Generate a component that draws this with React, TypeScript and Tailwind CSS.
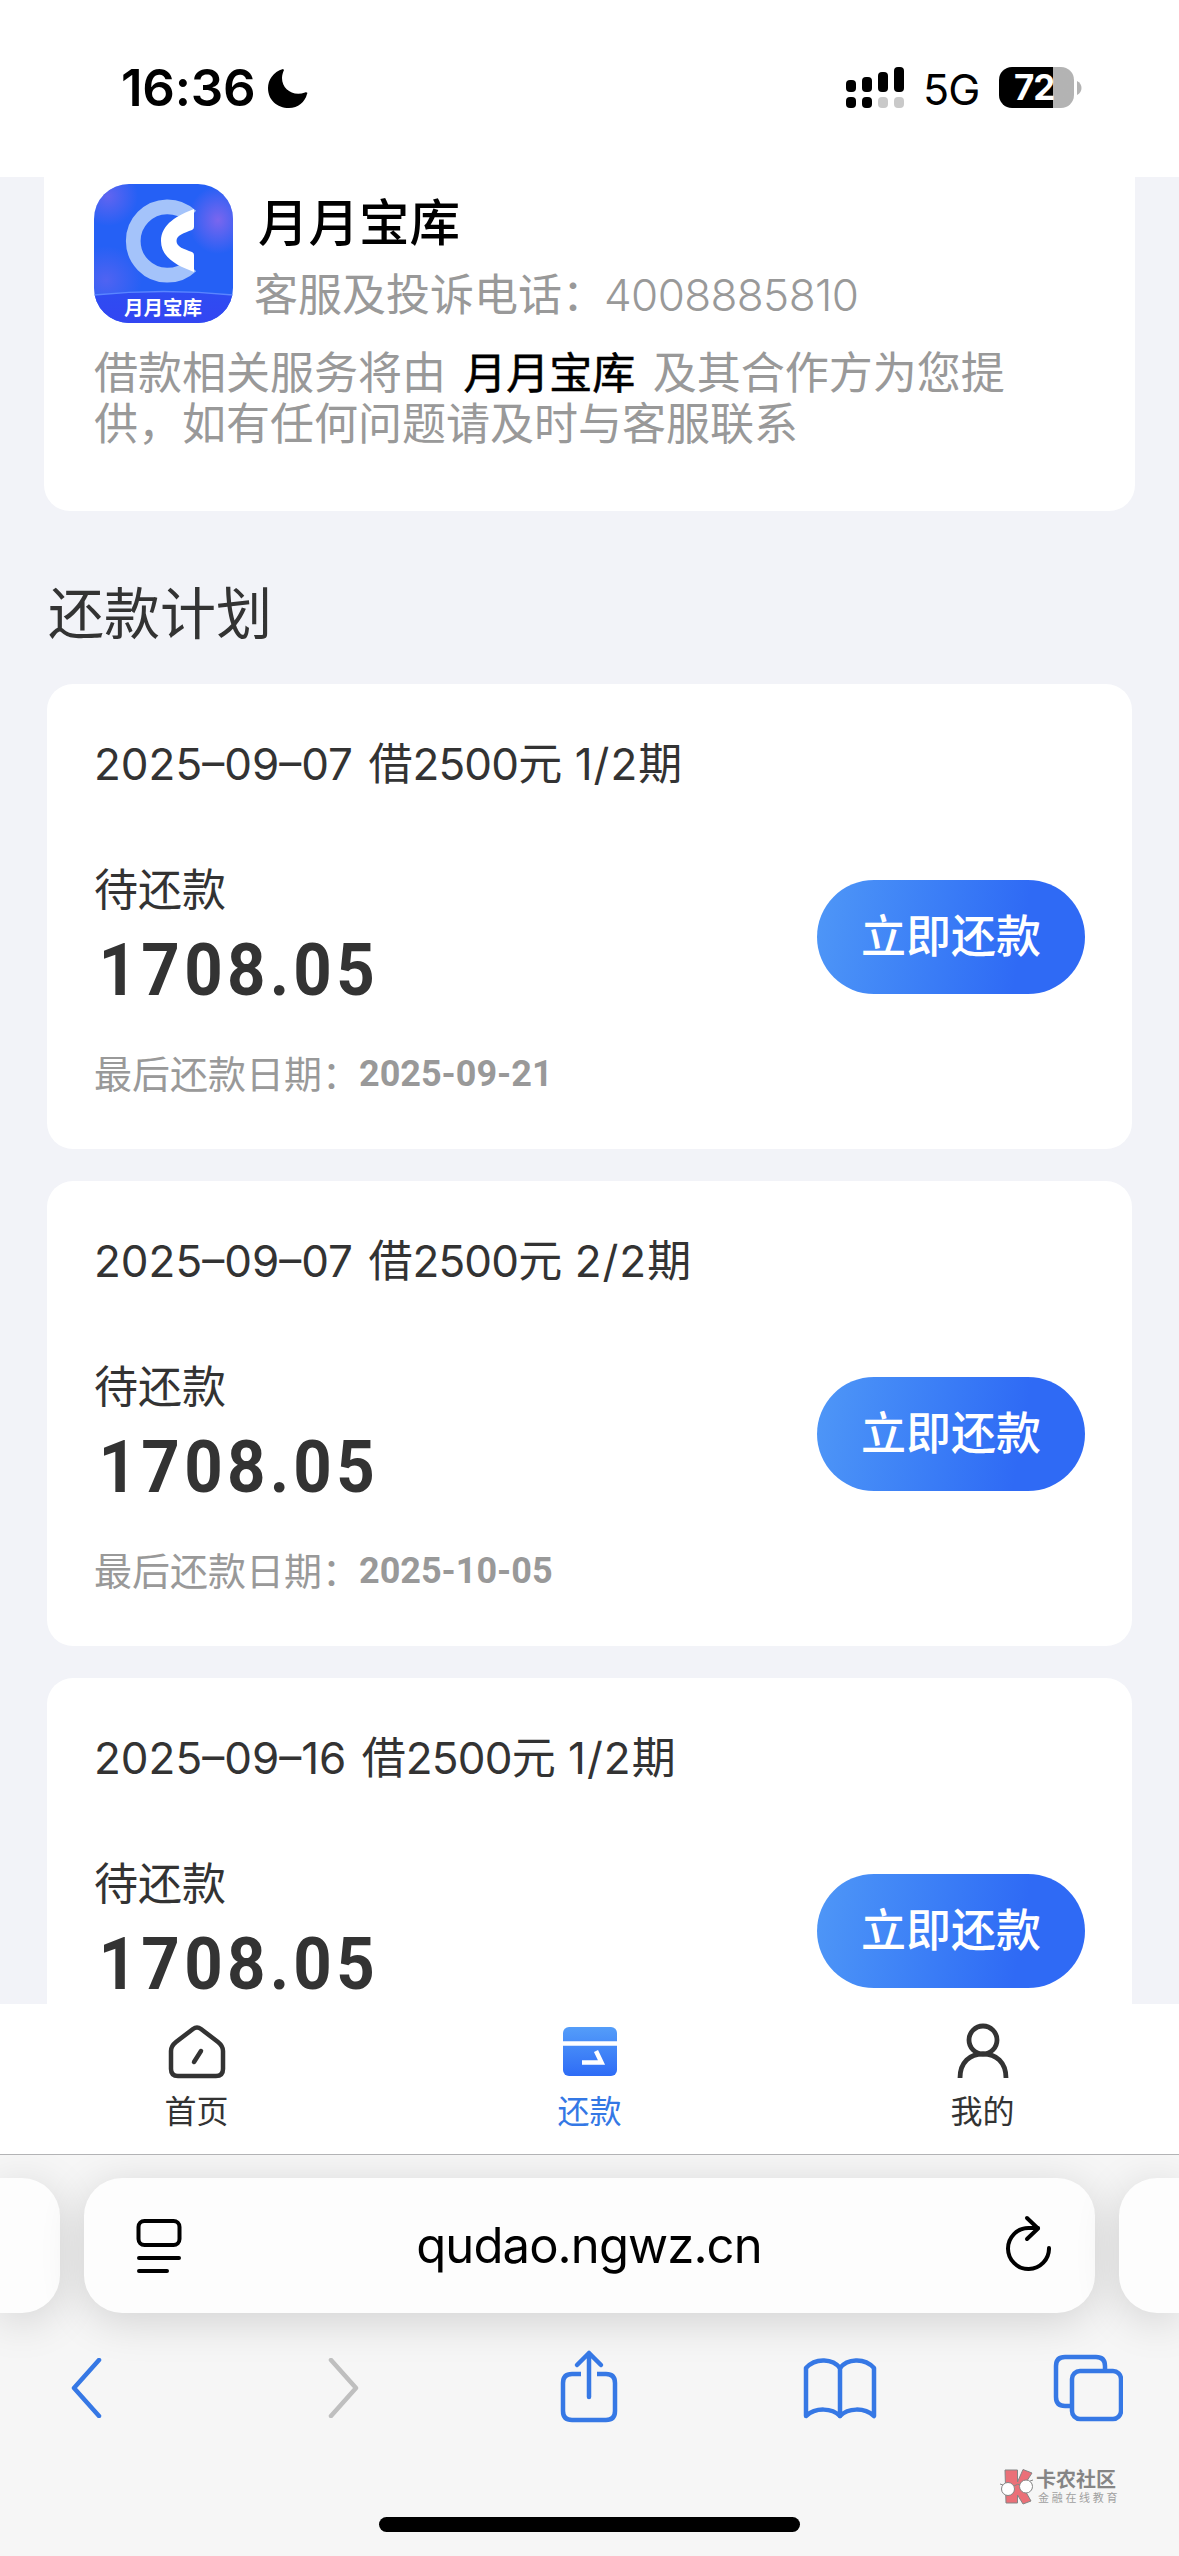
import React from "react";

const repayments = [
  { date: "2025–09–07", amount: 2500, period: "1/2", due: "1708.05", deadline: "2025-09-21" },
  { date: "2025–09–07", amount: 2500, period: "2/2", due: "1708.05", deadline: "2025-10-05" },
  { date: "2025–09–16", amount: 2500, period: "1/2", due: "1708.05", deadline: "" },
];

const StatusBar: React.FC = () => (
  <header className="flex h-[177px] shrink-0 items-start justify-between bg-white pl-[121px] pr-[97px] pt-[67px] text-black">
    <div className="flex items-start">
      <span className="w-[146px] whitespace-nowrap text-[51px] font-semibold leading-[42px] tracking-[-0.2px]">16:36</span>
      <svg width="42" height="42" viewBox="0 0 42 42">
        <path d="M16 2C6 5 1 13 1 21C1 33 10 41 22 41C31 41 38 35 40 27C41 26 40 25 38 25.500C26 30 15 22 15 11C15 8 16 5 17 3z" fill="#000" />
      </svg>
    </div>
    <div className="flex items-start">
      <svg width="60" height="42" viewBox="0 0 60 42">
        <rect x="0" y="13" width="10" height="12" rx="4" />
        <rect x="16" y="10" width="10" height="15" rx="4" />
        <rect x="32" y="5" width="10" height="20" rx="4" />
        <rect x="48" y="0" width="10" height="25" rx="4" />
        <rect x="0" y="30" width="10" height="11" rx="4" />
        <rect x="16" y="30" width="10" height="11" rx="4" />
        <rect x="32" y="30" width="10" height="11" rx="4" fill="#c9c9c9" />
        <rect x="48" y="30" width="10" height="11" rx="4" fill="#c9c9c9" />
      </svg>
      <span className="ml-[17px] w-[76px] text-[43px] leading-[44px] tracking-[-1px]">5G</span>
      <div className="flex h-[41px] w-[75px] items-center overflow-hidden rounded-[13px] bg-linear-to-r from-black from-72% to-[#b3b3b3] to-72% pl-[15px] text-[35px] font-bold leading-none tracking-[-1px] text-white">
        72
      </div>
      <svg className="ml-[3px] mt-[14px]" width="5" height="14" viewBox="0 0 5 14">
        <path d="M0 0c6 3 6 11 0 14z" fill="#b3b3b3" />
      </svg>
    </div>
  </header>
);

const AppLogo: React.FC = () => (
  <svg className="shrink-0" width="139" height="139" viewBox="0 0 139 139">
    <defs>
      <clipPath id="logo-clip">
        <rect width="139" height="139" rx="35" />
      </clipPath>
      <radialGradient id="logo-glow">
        <stop offset="0" stopColor="#7a66ee" />
        <stop offset="1" stopColor="#7a66ee" stopOpacity="0" />
      </radialGradient>
      <linearGradient id="logo-base" x1="0" y1="0" x2="0" y2="1">
        <stop offset="0" stopColor="#2e4cf2" />
        <stop offset="1" stopColor="#3346f2" />
      </linearGradient>
    </defs>
    <g clipPath="url(#logo-clip)">
      <rect width="139" height="139" fill="#2560f5" />
      <circle cx="14" cy="12" r="30" fill="url(#logo-glow)" opacity="0.7" />
      <ellipse cx="124" cy="36" rx="30" ry="34" fill="url(#logo-glow)" />
      <ellipse cx="12" cy="96" rx="36" ry="34" fill="url(#logo-glow)" opacity="0.5" />
      <path d="M0 111Q70 104 139 111V139H0z" fill="url(#logo-base)" />
      <path d="M0 111Q70 104 139 111" stroke="#5a85ff" strokeWidth="1.5" fill="none" />
    </g>
    <path d="M97 32.200A34.200 34.200 0 1 0 97 81.800" stroke="#a4c3fa" strokeWidth="14.700" fill="none" />
    <path d="M100 25V43Q100 45 98 46C90 49 82.500 51 82.500 57S90 65 98 68Q100 69 100 71V88C84 82 67 74 67 57S84 31 100 25z" fill="#fff" />
    <text x="69" y="130.500" textAnchor="middle" fontSize="19.500" fontWeight="700" fill="#fff" fontFamily="Noto Sans CJK SC">
      月月宝库
    </text>
  </svg>
);

const RepaymentCard: React.FC<{ item: (typeof repayments)[number] }> = ({ item }) => (
  <section className="flex h-[465px] shrink-0 flex-col rounded-[26px] bg-white px-[47px] pt-[48px]">
    <p className="text-[44px] leading-[64px]">
      <span className="mr-[3px]">{item.date}</span> 借<span className="tracking-[-0.8px]">{item.amount}</span>元{" "}
      <span className="tracking-[1px]">{item.period}</span>期
    </p>
    <div className="mt-[62px] flex items-start justify-between">
      <div>
        <p className="text-[44px] leading-[64px]">待还款</p>
        <p className="mt-[11px] w-[310px] origin-left scale-x-[0.92] pl-[5px] font-[Roboto] text-[73px] font-bold leading-[75px] tracking-[4.6px]">
          {item.due}
        </p>
      </div>
      <button className="mt-[22px] h-[114px] w-[268px] rounded-full bg-linear-100 from-[#4f97f7] to-[#2f6af5] to-75% text-[45px] font-medium text-white">
        立即还款
      </button>
    </div>
    {item.deadline && (
      <p className="mt-[42px] flex items-center text-[38px] leading-[48px] text-[#999]">
        <span className="w-[265px] whitespace-nowrap">最后还款日期：</span>
        <span className="font-[Roboto] text-[36px] font-bold">{item.deadline}</span>
      </p>
    )}
  </section>
);

const TabBar: React.FC = () => (
  <nav className="grid h-[150px] shrink-0 grid-cols-3 bg-white text-[32px] leading-[44px] text-[#333]">
    <div className="flex flex-col items-center pt-[18px]">
      <svg width="60" height="60" viewBox="0 0 60 60" fill="none" stroke="#333" strokeWidth="4.500" strokeLinecap="round" strokeLinejoin="round">
        <path d="M26 7Q30 4 34 7L51 20Q56 24 56 29V47Q56 54 49 54H11Q4 54 4 47V29Q4 24 9 20z" />
        <path d="M34 29L27 40" />
      </svg>
      <span className="mt-[8px]">首页</span>
    </div>
    <div className="flex flex-col items-center pt-[18px] text-[#3478e5]">
      <svg width="60" height="60" viewBox="0 0 60 60">
        <defs>
          <linearGradient id="tab-card" x1="0" y1="0" x2="0" y2="1">
            <stop offset="0" stopColor="#549df9" />
            <stop offset="1" stopColor="#2e6cf6" />
          </linearGradient>
        </defs>
        <rect x="3" y="5" width="54" height="49" rx="6" fill="url(#tab-card)" />
        <path d="M3 21.500H57" stroke="#fff" strokeWidth="4.500" />
        <path d="M22 40.500H41.500L36 29" stroke="#fff" strokeWidth="4.500" fill="none" />
      </svg>
      <span className="mt-[8px]">还款</span>
    </div>
    <div className="flex flex-col items-center pt-[18px]">
      <svg width="60" height="60" viewBox="0 0 60 60" fill="none" stroke="#333" strokeWidth="4.800">
        <circle cx="30" cy="18" r="14" />
        <path d="M7 56C7 40 17 32 30 32S53 40 53 56" />
      </svg>
      <span className="mt-[8px]">我的</span>
    </div>
  </nav>
);

const BrowserBar: React.FC = () => (
  <footer className="flex h-[402px] shrink-0 flex-col overflow-hidden border-t border-[#b3b3b5] bg-[#f6f6f6]">
    <div className="mt-[23px] flex h-[135px] shrink-0">
      <div className="w-[60px] rounded-r-[38px] bg-[#fdfdfd] shadow-[0_8px_44px_rgba(0,0,0,0.15)]" />
      <div className="ml-[24px] flex w-[1011px] items-center rounded-[38px] bg-[#fdfdfd] pl-[52px] pr-[44px] shadow-[0_8px_44px_rgba(0,0,0,0.15)]">
        <svg width="46" height="56" viewBox="0 0 46 56" fill="none" stroke="#000" strokeWidth="4" strokeLinecap="round">
          <rect x="2.500" y="3" width="41" height="24" rx="6" />
          <path d="M3 40H43M3 53H31" />
        </svg>
        <span className="flex-1 pr-[10px] text-center text-[49px] leading-[60px] tracking-[-0.9px] text-black">qudao.ngwz.cn</span>
        <svg className="mb-[5px]" width="45" height="56" viewBox="0 0 45 56" fill="none" stroke="#000" strokeWidth="4" strokeLinecap="round" strokeLinejoin="round">
          <path d="M43 33A20.500 20.500 0 1 1 22.500 13H32" />
          <path d="M21 3L32 13.500L21 24" />
        </svg>
      </div>
      <div className="ml-[24px] w-[60px] rounded-l-[38px] bg-[#fdfdfd] shadow-[0_8px_44px_rgba(0,0,0,0.15)]" />
    </div>
    <div className="flex h-[150px] shrink-0 items-center pl-[68px] text-[#3678e5]">
      <svg width="34" height="60" viewBox="0 0 34 60" fill="none" stroke="currentColor" strokeWidth="4.500" strokeLinecap="round" strokeLinejoin="round">
        <path d="M31 2L6 30L31 58" />
      </svg>
      <svg className="ml-[225px]" width="34" height="60" viewBox="0 0 34 60" fill="none" stroke="#bfbfbf" strokeWidth="4.500" strokeLinecap="round" strokeLinejoin="round">
        <path d="M4 2L29 30L4 58" />
      </svg>
      <svg className="mb-[2px] ml-[199px]" width="58" height="76" viewBox="0 0 58 76" fill="none" stroke="currentColor" strokeWidth="4.500" strokeLinejoin="round">
        <path d="M21 25H12Q3 25 3 34V62Q3 71 12 71H46Q55 71 55 62V34Q55 25 46 25H37" />
        <path d="M29 48V4M17 16L29 4L41 16" strokeLinecap="round" />
      </svg>
      <svg className="ml-[185px]" width="74" height="64" viewBox="0 0 74 64" fill="none" stroke="currentColor" strokeWidth="4.500" strokeLinecap="round" strokeLinejoin="round">
        <path d="M37 12C30 3 13 1 3 12V60C13 51 29 52 37 60C45 52 61 51 71 60V12C61 1 44 3 37 12z" />
        <path d="M37 12V60" />
      </svg>
      <svg className="ml-[176px]" width="70" height="68" viewBox="0 0 70 68" fill="none" stroke="currentColor" strokeWidth="4.500">
        <path d="M18 52H12Q3 52 3 43V12Q3 3 12 3H43Q52 3 52 12V17" />
        <rect x="19" y="17" width="49" height="48" rx="8" />
      </svg>
    </div>
    <div className="flex h-[48px] shrink-0 items-center justify-end pr-[63px]">
      <svg width="34" height="36" viewBox="0 0 34 36">
        <path d="M5 1H17.500V13L23 0.500L32 4L23 18L31 32L23 35L17.500 26V34H6z" fill="#ea7078" stroke="#858585" strokeWidth="1" />
        <path d="M14 17Q18 14 21 16M0 15L3 16M30 12L33 11" stroke="#858585" fill="none" />
        <circle cx="8" cy="20" r="6.500" fill="#fff" stroke="#858585" />
        <circle cx="26" cy="17.500" r="6.500" fill="#fff" stroke="#858585" />
      </svg>
      <div className="ml-[2px] w-[80px] whitespace-nowrap">
        <p className="text-[20px] font-bold leading-[21px] text-[#858585]">卡农社区</p>
        <p className="pl-[2px] text-[11px] leading-[14px] tracking-[2.700px] text-[#a0a0a0]">金融在线教育</p>
      </div>
    </div>
    <div className="mx-auto mt-[6px] h-[15px] w-[421px] shrink-0 rounded-full bg-black" />
  </footer>
);

const App: React.FC = () => {
  return (
    <div className="flex h-[2556px] w-[1179px] flex-col overflow-hidden bg-[#f2f3f8] font-[Inter,'Noto_Sans_CJK_SC',sans-serif] text-[#333]">
      <StatusBar />
      <main className="flex min-h-0 flex-1 flex-col overflow-hidden">
        <section className="mx-[44px] h-[334px] shrink-0 rounded-b-[26px] bg-white pl-[50px] pt-[7px]">
          <div className="flex h-[144px]">
            <AppLogo />
            <div className="ml-[21px]">
              <h1 className="pl-[4px] pt-[2px] text-[50.5px] font-medium leading-[74px] text-black">月月宝库</h1>
              <p className="flex text-[44px] leading-[70px] text-[#999]">
                <span className="w-[350px] whitespace-nowrap">客服及投诉电话：</span>
                <span className="font-light tracking-[-0.6px]">4008885810</span>
              </p>
            </div>
          </div>
          <p className="mt-[20px] w-[960px] text-[44px] leading-[51px] text-[#999]">
            借款相关服务将由 <span className="mx-[5px] text-[43px] text-black [-webkit-text-stroke:0.6px_black]">月月宝库</span> 及其合作方为您提供，如有任何问题请及时与客服联系
          </p>
        </section>
        <h2 className="ml-[48px] mt-[63px] text-[56px] leading-[80px]">还款计划</h2>
        <div className="mx-[47px] mt-[30px] flex flex-col gap-[32px]">
          {repayments.map((item, index) => (
            <RepaymentCard key={index} item={item} />
          ))}
        </div>
      </main>
      <TabBar />
      <BrowserBar />
    </div>
  );
};

export default App;
